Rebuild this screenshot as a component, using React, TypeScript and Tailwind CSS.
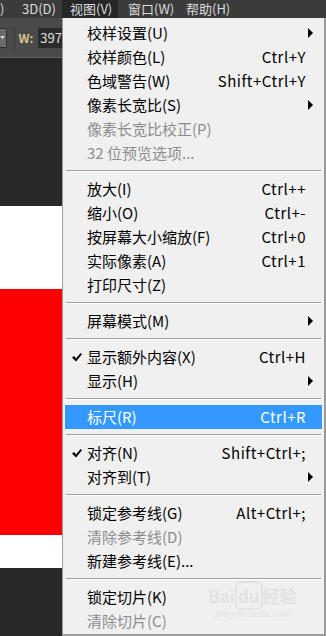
import React from "react";

type Item =
  | { kind: "sep" }
  | { kind: "item"; label: string; shortcut?: string; sub?: boolean; checked?: boolean; disabled?: boolean; active?: boolean };

const items: Item[] = [
  { kind: "item", label: "校样设置(U)", sub: true },
  { kind: "item", label: "校样颜色(L)", shortcut: "Ctrl+Y" },
  { kind: "item", label: "色域警告(W)", shortcut: "Shift+Ctrl+Y" },
  { kind: "item", label: "像素长宽比(S)", sub: true },
  { kind: "item", label: "像素长宽比校正(P)", disabled: true },
  { kind: "item", label: "32 位预览选项...", disabled: true },
  { kind: "sep" },
  { kind: "item", label: "放大(I)", shortcut: "Ctrl++" },
  { kind: "item", label: "缩小(O)", shortcut: "Ctrl+-" },
  { kind: "item", label: "按屏幕大小缩放(F)", shortcut: "Ctrl+0" },
  { kind: "item", label: "实际像素(A)", shortcut: "Ctrl+1" },
  { kind: "item", label: "打印尺寸(Z)" },
  { kind: "sep" },
  { kind: "item", label: "屏幕模式(M)", sub: true },
  { kind: "sep" },
  { kind: "item", label: "显示额外内容(X)", shortcut: "Ctrl+H", checked: true },
  { kind: "item", label: "显示(H)", sub: true },
  { kind: "sep" },
  { kind: "item", label: "标尺(R)", shortcut: "Ctrl+R", active: true },
  { kind: "sep" },
  { kind: "item", label: "对齐(N)", shortcut: "Shift+Ctrl+;", checked: true },
  { kind: "item", label: "对齐到(T)", sub: true },
  { kind: "sep" },
  { kind: "item", label: "锁定参考线(G)", shortcut: "Alt+Ctrl+;" },
  { kind: "item", label: "清除参考线(D)", disabled: true },
  { kind: "item", label: "新建参考线(E)..." },
  { kind: "sep" },
  { kind: "item", label: "锁定切片(K)" },
  { kind: "item", label: "清除切片(C)", disabled: true },
];

function Arrow() {
  return (
    <svg width="6" height="10" viewBox="0 0 6 10" className="fill-black">
      <path d="M1 0 L6 5 L1 10 Z" />
    </svg>
  );
}

function Check({ white }: { white?: boolean }) {
  return (
    <svg width="10" height="9" viewBox="0 0 10 9" className={white ? "fill-white" : "fill-black"}>
      <path d="M0 4.5 L2 3 L4 5.5 L8.5 0 L10 1.3 L4 8.5 Z" />
    </svg>
  );
}

function MenuRow({ item }: { item: Item }) {
  if (item.kind === "sep") {
    return (
      <div className="flex h-[12px] items-center px-[3px]">
        <div className="h-[2px] w-full border-t border-b border-t-[#a0a0a0] border-b-white" />
      </div>
    );
  }
  const color = item.active ? "text-white" : item.disabled ? "text-[#8d8d8d]" : "text-black";
  return (
    <div className={`mx-[2px] flex h-[24px] items-center ${item.active ? "bg-[#3399ff]" : ""} ${color}`}>
      <div className="flex w-[22px] justify-center pl-[2px]">{item.checked && <Check white={item.active} />}</div>
      <div className="flex-1">{item.label}</div>
      {item.shortcut && <div className="pr-[16px] tracking-[0.5px]">{item.shortcut}</div>}
      {item.sub && (
        <div className="pr-[9px]">
          <Arrow />
        </div>
      )}
    </div>
  );
}

export default function App() {
  return (
    <div
      className="relative h-[636px] w-[326px] overflow-hidden bg-[#282828] text-[15px]"
      style={{ fontFamily: '"Noto Sans CJK SC", "Liberation Sans", sans-serif' }}
    >
      {/* menu bar */}
      <div className="flex h-[18px] items-center bg-[#3b3b3b] text-[13px] leading-[18px] text-[#dcdcdc]">
        <div className="w-[22px]">)</div>
        <div className="w-[40px]">3D(D)</div>
        <div className="w-[56px] bg-[#262626] pl-[8px]">视图(V)</div>
        <div className="w-[58px] pl-[10px]">窗口(W)</div>
        <div className="pl-[10px]">帮助(H)</div>
      </div>

      <div className="flex h-[618px]">
        {/* left canvas strip */}
        <div className="flex w-[62px] flex-col">
          <div className="flex h-[39px] items-center bg-[#4a4a4a]">
            <div className="flex h-[20px] w-[8px] items-center justify-center rounded-r-[2px] border border-l-0 border-[#2e2e2e] bg-[#6a6a6a]">
              <svg width="5" height="3" viewBox="0 0 5 3" className="fill-[#dcdcdc]">
                <path d="M0 0 H5 L2.5 3 Z" />
              </svg>
            </div>
            <div className="ml-[7px] h-[24px] w-[1px] bg-[#3a3a3a]" />
            <div className="ml-[4px] text-[12px] font-bold text-[#d8c88a]">W:</div>
            <div className="ml-[5px] flex h-[20px] flex-1 items-center bg-[#2b2b2b] pl-[2px] text-[13px] text-[#e0e0e0]">397</div>
          </div>
          <div className="h-[1px] bg-[#606060]" />
          <div className="h-[148px] bg-[#282828]" />
          <div className="h-[83px] bg-white" />
          <div className="h-[246px] bg-[#ff0000]" />
          <div className="h-[33px] bg-white" />
          <div className="flex-1 bg-[#282828]" />
        </div>

        {/* dropdown menu */}
        <div className="relative flex-1 border-b-2 border-l border-r-2 border-[#9a9a9a] bg-[#f0f0f0] pt-[3px]">
          {items.map((it, i) => (
            <MenuRow key={i} item={it} />
          ))}
          <div className="pointer-events-none absolute left-[145px] top-[569px] select-none text-center leading-none text-[#e2e2e2]">
            <div className="text-[17px] font-bold">
              Bai<span className="rounded-[6px] border-2 border-[#e2e2e2] px-[1px]">du</span>经验
            </div>
            <div className="mt-[5px] text-[10px]" style={{ fontFamily: '"Liberation Serif", serif' }}>
              jingyan.baidu.com
            </div>
          </div>
        </div>
      </div>
    </div>
  );
}
